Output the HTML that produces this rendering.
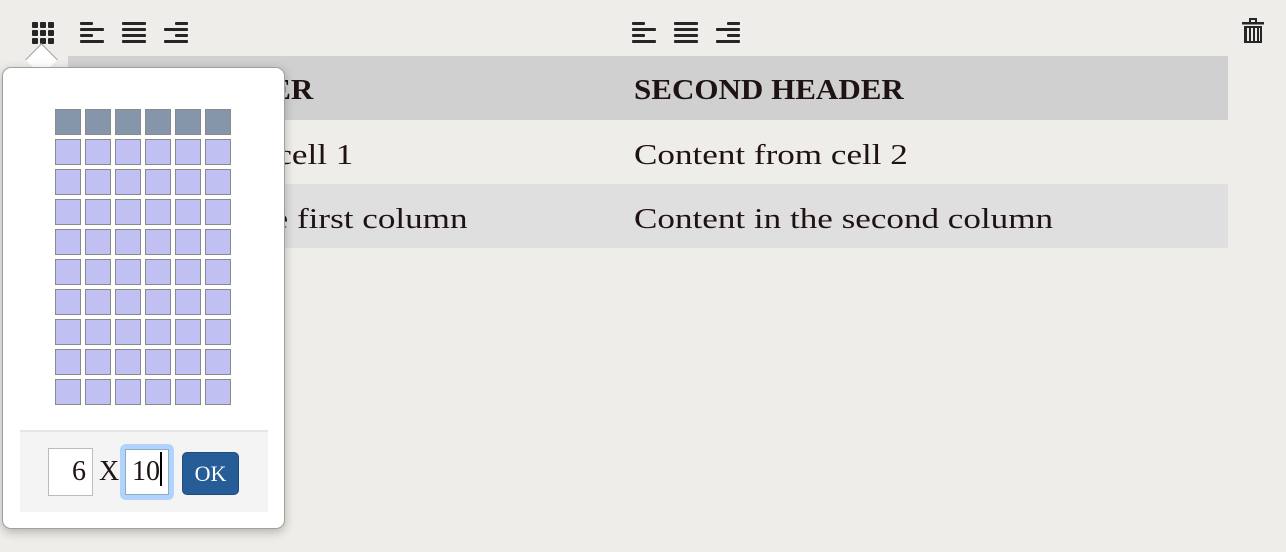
<!DOCTYPE html>
<html><head><style>
body{margin:0;width:1286px;height:552px;background:#efede9;position:relative;overflow:hidden;font-family:"Liberation Serif",serif;color:#1e1212}
.ic{position:absolute}
.row{position:absolute;left:68px;width:1160px;height:64px}
.t{position:absolute;font-size:29px;line-height:64px;white-space:nowrap;transform:scaleX(1.21);transform-origin:left center}
.tr{transform-origin:right center}
.h{font-weight:bold;transform:scaleX(1.07)}
.pop{position:absolute;left:2px;top:67px;width:281px;height:460px;background:#fff;border:1px solid #a0a09c;border-radius:9px;box-shadow:0 3px 10px rgba(0,0,0,.25)}
.arrow{position:absolute;left:30px;top:48px;width:22px;height:22px;background:#fff;border-left:1px solid #a0a09c;border-top:1px solid #a0a09c;transform:rotate(45deg);}
.cell{position:absolute;width:24px;height:24px;border:1px solid #8a8a8a;background:#c0c0f2}
.foot{position:absolute;left:17px;top:362px;width:248px;height:80px;background:#f4f4f4;border-top:2px solid #e6e6e6}
</style></head><body>
<svg class="ic" style="left:32px;top:22px" width="22" height="22"><g fill="#262626"><rect x="0" y="0" width="6" height="6" rx="1"/><rect x="8" y="0" width="6" height="6" rx="1"/><rect x="16" y="0" width="6" height="6" rx="1"/><rect x="0" y="8" width="6" height="6" rx="1"/><rect x="8" y="8" width="6" height="6" rx="1"/><rect x="16" y="8" width="6" height="6" rx="1"/><rect x="0" y="16" width="6" height="6" rx="1"/><rect x="8" y="16" width="6" height="6" rx="1"/><rect x="16" y="16" width="6" height="6" rx="1"/></g></svg>
<svg class="ic" style="left:80px;top:22px" width="24" height="22"><g fill="#262626"><rect x="0" y="0" width="13" height="3" rx="1"/><rect x="0" y="6" width="24" height="3" rx="1"/><rect x="0" y="12" width="13" height="3" rx="1"/><rect x="0" y="18" width="24" height="3" rx="1"/></g></svg>
<svg class="ic" style="left:122px;top:22px" width="24" height="22"><g fill="#262626"><rect x="0" y="0" width="24" height="3" rx="1"/><rect x="0" y="6" width="24" height="3" rx="1"/><rect x="0" y="12" width="24" height="3" rx="1"/><rect x="0" y="18" width="24" height="3" rx="1"/></g></svg>
<svg class="ic" style="left:164px;top:22px" width="24" height="22"><g fill="#262626"><rect x="11" y="0" width="13" height="3" rx="1"/><rect x="0" y="6" width="24" height="3" rx="1"/><rect x="11" y="12" width="13" height="3" rx="1"/><rect x="0" y="18" width="24" height="3" rx="1"/></g></svg>
<svg class="ic" style="left:632px;top:22px" width="24" height="22"><g fill="#262626"><rect x="0" y="0" width="13" height="3" rx="1"/><rect x="0" y="6" width="24" height="3" rx="1"/><rect x="0" y="12" width="13" height="3" rx="1"/><rect x="0" y="18" width="24" height="3" rx="1"/></g></svg>
<svg class="ic" style="left:674px;top:22px" width="24" height="22"><g fill="#262626"><rect x="0" y="0" width="24" height="3" rx="1"/><rect x="0" y="6" width="24" height="3" rx="1"/><rect x="0" y="12" width="24" height="3" rx="1"/><rect x="0" y="18" width="24" height="3" rx="1"/></g></svg>
<svg class="ic" style="left:716px;top:22px" width="24" height="22"><g fill="#262626"><rect x="11" y="0" width="13" height="3" rx="1"/><rect x="0" y="6" width="24" height="3" rx="1"/><rect x="11" y="12" width="13" height="3" rx="1"/><rect x="0" y="18" width="24" height="3" rx="1"/></g></svg>
<svg class="ic" style="left:1242px;top:17px" width="22" height="28"><g fill="#262626"><path d="M7 1h8v4h-2V3h-4v2H7z"/><rect x="0" y="5" width="22" height="2.5"/><path d="M2 9h18v17H2z M5 11v13h2V11z M9 11v13h2V11z M13 11v13h2V11z M17 11v13h1V11z" fill-rule="evenodd"/></g></svg>
<div class="row" style="top:56px;background:#d0d0d0"></div>
<div class="row" style="top:184px;background:#e0dfdf"></div>
<div class="t h" style="left:82px;top:58px">FIRST HEADER</div>
<div class="t h" style="left:634px;top:58px">SECOND HEADER</div>
<div class="t tr" style="right:933px;top:123px">Content from cell 1</div>
<div class="t" style="left:634px;top:123px">Content from cell 2</div>
<div class="t tr" style="right:818px;top:187px">Content in the first column</div>
<div class="t" style="left:634px;top:187px">Content in the second column</div>
<div class="arrow"></div>
<div class="pop">
<div id="g"></div>
<div class="foot">
 <div style="position:absolute;left:28px;top:16px;background:#fff;border:1px solid #bcbcbc;font-size:28px;line-height:46px;text-align:right;box-sizing:border-box;padding-right:6px;width:45px;height:48px">6</div>
 <div style="position:absolute;left:79px;top:16px;font-size:28px;line-height:48px">X</div>
 <div style="position:absolute;left:100px;top:12px;width:54px;height:56px;background:#b0d4fb;border-radius:6px"></div>
 <div style="position:absolute;left:105px;top:17px;width:44px;height:46px;background:#fff;border:1px solid #8fa9c9;box-sizing:border-box;font-size:28px;line-height:44px;padding-left:6px">10<span style="display:inline-block;width:2px;height:34px;background:#000;vertical-align:-6px"></span></div>
 <div style="position:absolute;left:162px;top:20px;width:57px;height:43px;background:#265d97;border:1px solid #1d4c80;box-sizing:border-box;border-radius:5px;color:#fff;font-size:22px;line-height:41px;text-align:center">OK</div>
</div>
</div>
<script>
var g=document.getElementById('g'),h='';
for(var r=0;r<10;r++)for(var c=0;c<6;c++)h+='<div class="cell" style="left:'+(52+c*30)+'px;top:'+(41+r*30)+'px;'+(r==0?'background:#8596ab':'')+'"></div>';
g.innerHTML=h;
</script>
</body></html>
